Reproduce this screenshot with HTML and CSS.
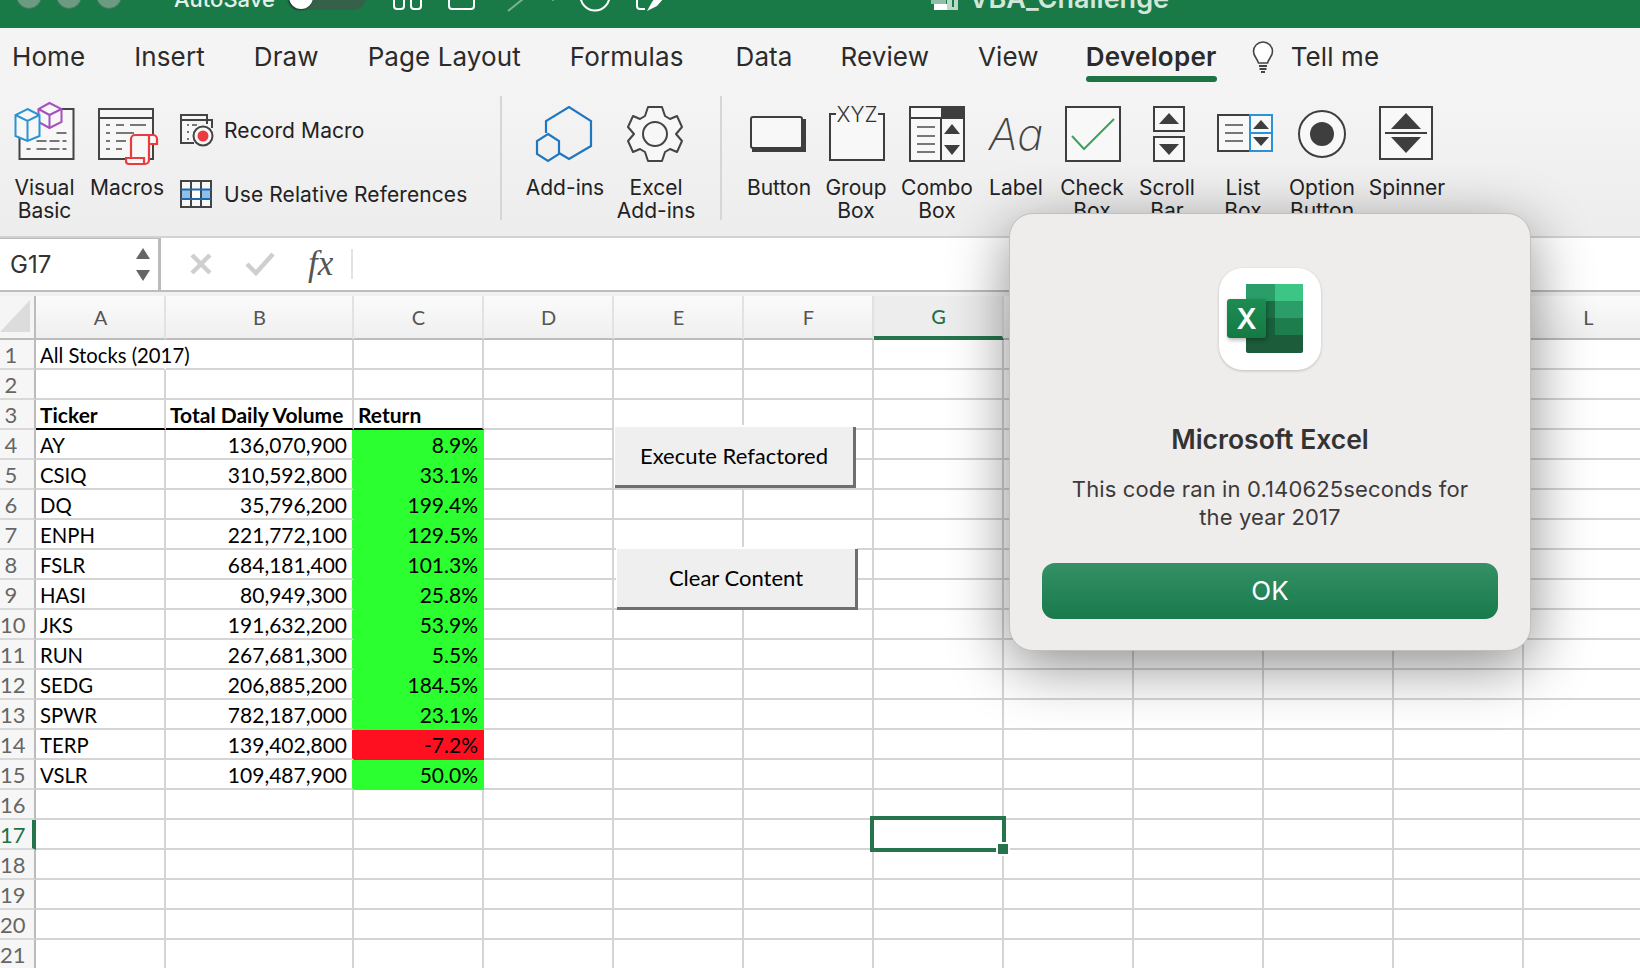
FILE: index.html
```html
<!DOCTYPE html>
<html lang="en">
<head>
<meta charset="utf-8">
<title>VBA_Challenge</title>
<link rel="stylesheet" href="styles.css">
</head>
<body>
<div class="app">
  <header class="titlebar">
    <div class="lights"><span class="light"></span><span class="light"></span><span class="light"></span></div>
    <span class="autosave">AutoSave</span>
    <div class="toggle"><span class="knob"></span><span class="off">Off</span></div>
    <svg class="qat" width="280" height="28" viewBox="390 0 280 28">
      <g fill="none" stroke="#fff" stroke-width="2">
        <path d="M393 -6V6a3 3 0 0 0 3 3h4a3 3 0 0 0 3-3V-6"/>
        <path d="M410 -6V6a3 3 0 0 0 3 3h4a3 3 0 0 0 3-3V-6"/>
        <path d="M448 -6V6a3 3 0 0 0 3 3h19a3 3 0 0 0 3-3V-6"/>
        <path d="M507 11L522 -1" stroke="#7fb296"/>
        <circle cx="594" cy="-4" r="14.5"/>
        <path d="M636 -6V6a3 3 0 0 0 3 3h5"/>
      </g>
      <path d="M646 11L651 2L654 -2L663 -2L656 6Z" fill="#fff"/>
      <circle cx="552" cy="0" r="1" fill="#7fb296"/>
    </svg>
    <svg class="docicon" width="28" height="28" viewBox="932 0 28 28">
      <rect x="932" y="-4" width="15" height="8" fill="#8fbfa5"/>
      <rect x="935" y="4" width="13" height="6" fill="#fff"/>
      <rect x="948" y="-4" width="11" height="14" fill="#bcd8c8"/>
      <rect x="953" y="-4" width="2" height="11" fill="#1a7a47"/>
    </svg>
    <span class="doctitle">VBA_Challenge</span>
  </header>

  <nav class="tabs">
    <span class="tab">Home</span>
    <span class="tab">Insert</span>
    <span class="tab">Draw</span>
    <span class="tab">Page Layout</span>
    <span class="tab">Formulas</span>
    <span class="tab tab-data">Data</span>
    <span class="tab">Review</span>
    <span class="tab">View</span>
    <span class="tab tab-active">Developer</span>
    <svg class="bulb" width="24" height="34" viewBox="0 0 24 34">
      <path d="M12 2a9.500 9.500 0 0 0-9.500 9.500c0 4.500 3.500 6.500 5 11.500h9c1.500-5 5-7 5-11.500A9.500 9.500 0 0 0 12 2Z" fill="#fff" stroke="#444" stroke-width="1.600"/>
      <path d="M8 26h8M8.500 29h7M10 32h4" stroke="#444" stroke-width="1.800" fill="none"/>
    </svg>
    <span class="tab tell">Tell me</span>
  </nav>

  <section class="ribbon">
    <div class="tool">
      <svg class="ic" width="60" height="80" viewBox="14.500 96 60 80">
        <path d="M60 109H73V159H19V134" fill="#f7f7f7" stroke="#444" stroke-width="2"/>
        <path d="M56 133H66M36 141H66M36 149H66M26 149H30" stroke="#777" stroke-width="2" stroke-dasharray="10 3" fill="none"/>
        <g fill="#f7f7f7" stroke="#a64fbf" stroke-width="2"><path d="M49 103L61 109V122L49 128L38 122V109Z"/><path d="M38 109L49 115L61 109M49 115V128" fill="none"/></g>
        <g fill="#f7f7f7" stroke="#2a93d5" stroke-width="2"><path d="M27 109L39 115V136L27 141L15 136V115Z"/><path d="M15 115L27 121L39 115M27 121V141" fill="none"/></g>
      </svg>
      <span class="label">Visual<br>Basic</span>
    </div>
    <div class="tool">
      <svg class="ic" width="60" height="80" viewBox="97 96 60 80">
        <path d="M99 109H153V159H99ZM99 118H153" fill="#f7f7f7" stroke="#444" stroke-width="2"/>
        <path d="M106 125H110M116 125H124M130 125H146M106 133H110M116 133H134M106 141H110M116 141H126M106 149H110M116 149H122" stroke="#777" stroke-width="2" fill="none"/>
        <path d="M131 159V139a4 4 0 0 1 4-4H153a4 4 0 0 1 4 4v5h-8M149 135v25a4 4 0 0 1-4 4H129a3 3 0 0 1-3-3V158H144v6" fill="#f7f7f7" stroke="#ea3c40" stroke-width="2.200"/>
      </svg>
      <span class="label">Macros</span>
    </div>
    <div class="smalls">
      <div class="small">
        <svg width="36" height="36" viewBox="179 112 36 36">
          <path d="M207 124V115H181V143H194M181 120H212V128" fill="#f7f7f7" stroke="#444" stroke-width="2"/>
          <path d="M187 125h2M192 125h5M187 132h2M187 139h2" stroke="#777" stroke-width="2"/>
          <circle cx="203" cy="136" r="9.500" fill="#f7f7f7" stroke="#444" stroke-width="2"/>
          <circle cx="203" cy="136" r="5.500" fill="#ea3c40"/>
        </svg>
        <span>Record Macro</span>
      </div>
      <div class="small">
        <svg width="36" height="36" viewBox="179 176 36 36">
          <rect x="181" y="181" width="30" height="26" fill="#f7f7f7"/>
          <rect x="181" y="190" width="30" height="9" fill="#8cc0ec"/>
          <rect x="191" y="190" width="10" height="9" fill="#fff"/>
          <path d="M181 181H211V207H181ZM191 181V207M201 181V207" fill="none" stroke="#444" stroke-width="2"/>
          <path d="M181 189.500H211M181 199H211" stroke="#1f66ac" stroke-width="2"/>
        </svg>
        <span>Use Relative References</span>
      </div>
    </div>
    <div class="sep"></div>
    <div class="tool">
      <svg class="ic" width="60" height="80" viewBox="535 96 60 80">
        <path d="M546 133V121L569 107L591 121V146L569 159L559 153" fill="none" stroke="#2176c0" stroke-width="2.200"/>
        <path d="M548 134L559 141V154L548 161L537 154V141Z" fill="none" stroke="#2176c0" stroke-width="2.200"/>
      </svg>
      <span class="label">Add-ins</span>
    </div>
    <div class="tool">
      <svg class="ic" width="60" height="80" viewBox="626 96 60 80">
        <path d="M648 107H662L665 116L670 119L677 116L682 127L676 134L682 141L677 152L670 149L665 152L662 161H648L645 152L640 149L633 152L628 141L634 134L628 127L633 116L640 119L645 116Z" fill="#f7f7f7" stroke="#444" stroke-width="2" stroke-linejoin="round"/>
        <circle cx="655" cy="134" r="12" fill="none" stroke="#444" stroke-width="2"/>
      </svg>
      <span class="label">Excel<br>Add-ins</span>
    </div>
    <div class="sep"></div>
    <div class="tool">
      <svg class="ic" width="60" height="80" viewBox="749 96 60 80">
        <path d="M752 150H804V119" fill="none" stroke="#3e3e3e" stroke-width="4"/>
        <rect x="751" y="117" width="51" height="31" rx="2" fill="#f8f8f8" stroke="#3e3e3e" stroke-width="2"/>
      </svg>
      <span class="label">Button</span>
    </div>
    <div class="tool">
      <svg class="ic" width="60" height="80" viewBox="826 96 60 80">
        <path d="M836 114H830V160H884V114H878" fill="#f8f8f8" stroke="#3e3e3e" stroke-width="2"/>
        <text class="xyz" x="857" y="122" text-anchor="middle">XYZ</text>
      </svg>
      <span class="label">Group<br>Box</span>
    </div>
    <div class="tool">
      <svg class="ic" width="60" height="80" viewBox="907 96 60 80">
        <rect x="910" y="107" width="54" height="54" fill="#f8f8f8" stroke="#3e3e3e" stroke-width="2"/>
        <rect x="941" y="107" width="23" height="11" fill="#3e3e3e"/>
        <path d="M910 118H964M941 118V161" stroke="#3e3e3e" stroke-width="2"/>
        <path d="M917 127H935M917 136H935M917 144H935M917 152H935" stroke="#777" stroke-width="2"/>
        <path d="M952 124L960 134H944ZM952 155L944 145H960Z" fill="#3e3e3e"/>
      </svg>
      <span class="label">Combo<br>Box</span>
    </div>
    <div class="tool">
      <div class="aa">Aa</div>
      <span class="label">Label</span>
    </div>
    <div class="tool">
      <svg class="ic" width="60" height="80" viewBox="1062 96 60 80">
        <rect x="1066" y="107" width="54" height="54" fill="#f8f8f8" stroke="#3e3e3e" stroke-width="2"/>
        <path d="M1072 136L1084 149L1114 119" fill="none" stroke="#3ea35a" stroke-width="2"/>
      </svg>
      <span class="label">Check<br>Box</span>
    </div>
    <div class="tool">
      <svg class="ic" width="60" height="80" viewBox="1137 96 60 80">
        <rect x="1154" y="107" width="30" height="24" fill="#f8f8f8" stroke="#3e3e3e" stroke-width="2"/>
        <rect x="1154" y="137" width="30" height="24" fill="#f8f8f8" stroke="#3e3e3e" stroke-width="2"/>
        <path d="M1169 113L1179 124H1159ZM1169 155L1159 144H1179Z" fill="#3e3e3e"/>
      </svg>
      <span class="label">Scroll<br>Bar</span>
    </div>
    <div class="tool">
      <svg class="ic" width="60" height="80" viewBox="1213 96 60 80">
        <rect x="1218" y="115" width="36" height="36" fill="#f8f8f8" stroke="#3e3e3e" stroke-width="2"/>
        <path d="M1225 125H1243M1225 133H1243M1225 141H1243" stroke="#777" stroke-width="2"/>
        <path d="M1250 115H1272V133H1250ZM1250 133H1272V151H1250Z" fill="#f8f8f8" stroke="#2a93d5" stroke-width="2"/>
        <path d="M1261 120L1269 129H1253ZM1261 146L1253 137H1269Z" fill="#3e3e3e"/>
      </svg>
      <span class="label">List<br>Box</span>
    </div>
    <div class="tool">
      <svg class="ic" width="60" height="80" viewBox="1293 96 60 80">
        <circle cx="1323" cy="134" r="23" fill="#f8f8f8" stroke="#3e3e3e" stroke-width="2"/>
        <circle cx="1323" cy="134" r="12" fill="#3e3e3e"/>
      </svg>
      <span class="label">Option<br>Button</span>
    </div>
    <div class="tool">
      <svg class="ic" width="60" height="80" viewBox="1377 96 60 80">
        <rect x="1380" y="107" width="52" height="52" fill="#f8f8f8" stroke="#3e3e3e" stroke-width="2"/>
        <path d="M1406 113L1421 129H1391ZM1406 153L1391 137H1421Z" fill="#3e3e3e"/>
        <path d="M1385 133H1427" stroke="#3e3e3e" stroke-width="2"/>
      </svg>
      <span class="label">Spinner</span>
    </div>
  </section>

  <section class="formula">
    <div class="namebox">
      <span class="cellref">G17</span>
      <svg width="16" height="36" viewBox="0 0 16 36"><path d="M8 1L15 12H1ZM8 34L1 23H15Z" fill="#666"/></svg>
    </div>
    <svg class="fbtn" width="190" height="40" viewBox="161 246 190 40">
      <path d="M192 257L210 275M210 257L192 275" stroke="#cfcfcf" stroke-width="4.500" fill="none"/>
      <path d="M247 266L256 275L273 256" stroke="#cfcfcf" stroke-width="4.500" fill="none"/>
    </svg>
    <span class="fx">fx</span>
    <span class="fsep"></span>
  </section>

  <div class="gap"></div>

  <main class="sheet">
    <table class="grid">
      <colgroup>
        <col class="c-hd"><col class="c-a"><col class="c-b"><col class="c-a"><col class="c-a"><col class="c-a"><col class="c-a"><col class="c-a"><col class="c-a"><col class="c-a"><col class="c-a"><col class="c-a"><col class="c-a">
      </colgroup>
      <thead>
        <tr>
          <th class="corner"><svg width="30" height="36" viewBox="0 0 30 36"><path d="M30 4V36H0Z" fill="#dcdcdc"/></svg></th>
          <th>A</th><th>B</th><th>C</th><th>D</th><th>E</th><th>F</th><th class="col-sel">G</th><th>H</th><th>I</th><th>J</th><th>K</th><th>L</th>
        </tr>
      </thead>
      <tbody>
        <tr><th>1</th><td class="spill txt">All Stocks (2017)</td><td></td><td></td><td></td><td></td><td></td><td></td><td></td><td></td><td></td><td></td><td></td></tr>
        <tr><th>2</th><td></td><td></td><td></td><td></td><td></td><td></td><td></td><td></td><td></td><td></td><td></td><td></td></tr>
        <tr><th>3</th><td class="hb">Ticker</td><td class="hb">Total Daily Volume</td><td class="hb">Return</td><td></td><td></td><td></td><td></td><td></td><td></td><td></td><td></td><td></td></tr>
        <tr><th>4</th><td class="txt">AY</td><td class="num pos">136,070,900</td><td class="num up">8.9%</td><td></td><td></td><td></td><td></td><td></td><td></td><td></td><td></td><td></td></tr>
        <tr><th>5</th><td class="txt">CSIQ</td><td class="num pos">310,592,800</td><td class="num up">33.1%</td><td></td><td></td><td></td><td></td><td></td><td></td><td></td><td></td><td></td></tr>
        <tr><th>6</th><td class="txt">DQ</td><td class="num pos">35,796,200</td><td class="num up">199.4%</td><td></td><td></td><td></td><td></td><td></td><td></td><td></td><td></td><td></td></tr>
        <tr><th>7</th><td class="txt">ENPH</td><td class="num pos">221,772,100</td><td class="num up">129.5%</td><td></td><td></td><td></td><td></td><td></td><td></td><td></td><td></td><td></td></tr>
        <tr><th>8</th><td class="txt">FSLR</td><td class="num pos">684,181,400</td><td class="num up">101.3%</td><td></td><td></td><td></td><td></td><td></td><td></td><td></td><td></td><td></td></tr>
        <tr><th>9</th><td class="txt">HASI</td><td class="num pos">80,949,300</td><td class="num up">25.8%</td><td></td><td></td><td></td><td></td><td></td><td></td><td></td><td></td><td></td></tr>
        <tr><th>10</th><td class="txt">JKS</td><td class="num pos">191,632,200</td><td class="num up">53.9%</td><td></td><td></td><td></td><td></td><td></td><td></td><td></td><td></td><td></td></tr>
        <tr><th>11</th><td class="txt">RUN</td><td class="num pos">267,681,300</td><td class="num up">5.5%</td><td></td><td></td><td></td><td></td><td></td><td></td><td></td><td></td><td></td></tr>
        <tr><th>12</th><td class="txt">SEDG</td><td class="num pos">206,885,200</td><td class="num up">184.5%</td><td></td><td></td><td></td><td></td><td></td><td></td><td></td><td></td><td></td></tr>
        <tr><th>13</th><td class="txt">SPWR</td><td class="num pos">782,187,000</td><td class="num up">23.1%</td><td></td><td></td><td></td><td></td><td></td><td></td><td></td><td></td><td></td></tr>
        <tr><th>14</th><td class="txt">TERP</td><td class="num neg">139,402,800</td><td class="num down">-7.2%</td><td></td><td></td><td></td><td></td><td></td><td></td><td></td><td></td><td></td></tr>
        <tr><th>15</th><td class="txt">VSLR</td><td class="num pos">109,487,900</td><td class="num up">50.0%</td><td></td><td></td><td></td><td></td><td></td><td></td><td></td><td></td><td></td></tr>
        <tr><th>16</th><td></td><td></td><td></td><td></td><td></td><td></td><td></td><td></td><td></td><td></td><td></td><td></td></tr>
        <tr><th class="row-sel">17</th><td></td><td></td><td></td><td></td><td></td><td></td><td class="active"><span class="selbox"></span><span class="selnotch"></span><span class="handle"></span></td><td></td><td></td><td></td><td></td><td></td></tr>
        <tr><th>18</th><td></td><td></td><td></td><td></td><td></td><td></td><td></td><td></td><td></td><td></td><td></td><td></td></tr>
        <tr><th>19</th><td></td><td></td><td></td><td></td><td></td><td></td><td></td><td></td><td></td><td></td><td></td><td></td></tr>
        <tr><th>20</th><td></td><td></td><td></td><td></td><td></td><td></td><td></td><td></td><td></td><td></td><td></td><td></td></tr>
        <tr><th>21</th><td></td><td></td><td></td><td></td><td></td><td></td><td></td><td></td><td></td><td></td><td></td><td></td></tr>
      </tbody>
    </table>
    <div class="formbtn btn-run">Execute Refactored</div>
    <div class="formbtn btn-clear">Clear Content</div>
  </main>

  <div class="dialog">
    <div class="appicon">
      <svg width="102" height="102" viewBox="1219 267 102 102">
        <rect x="1246" y="283" width="57" height="69" rx="2" fill="#1c5c3a"/>
        <rect x="1246" y="283" width="29" height="17" fill="#2a9d68"/>
        <rect x="1275" y="283" width="28" height="17" fill="#3dc585"/>
        <rect x="1246" y="300" width="29" height="17" fill="#1a6e43"/>
        <rect x="1275" y="300" width="28" height="17" fill="#2a9d68"/>
        <rect x="1246" y="317" width="29" height="17" fill="#17603c"/>
        <rect x="1275" y="317" width="28" height="17" fill="#1e7d4d"/>
      </svg>
      <span class="badge">X</span>
    </div>
    <h2 class="dlg-title">Microsoft Excel</h2>
    <p class="dlg-msg">This code ran in 0.140625seconds for<br>the year 2017</p>
    <button class="dlg-ok">OK</button>
  </div>
</div>
</body>
</html>
```
FILE: styles.css
```css
* { box-sizing: border-box; }
html, body { margin: 0; padding: 0; }
body { background: #fff; font-family: "Inter", "Liberation Sans", sans-serif; overflow: hidden; }
.app { position: relative; width: 1640px; height: 968px; overflow: hidden; }

/* title bar */
.titlebar { height: 28px; background: #1a7a47; display: flex; align-items: flex-end; overflow: visible; }
.lights { display: flex; gap: 14px; margin-left: 16px; margin-bottom: 19px; }
.light { width: 26px; height: 26px; border-radius: 50%; background: #6c9b82; border: 1px solid #3e7a5b; }
.autosave { margin-left: 52px; margin-bottom: 17px; color: #e4f0e9; font-size: 22px; line-height: 24px; font-weight: 500; }
.toggle { position: relative; width: 78px; height: 26px; margin-left: 13px; margin-bottom: 18px; border-radius: 13px; background: #356049; }
.knob { position: absolute; left: 1px; top: 1px; width: 24px; height: 24px; border-radius: 50%; background: #fff; box-shadow: -1px 1px 2px rgba(0,0,0,.5); }
.off { position: absolute; left: 33px; top: 0; color: #cfe0d6; font-size: 17px; line-height: 20px; }
.qat { display: block; margin-left: 25px; overflow: visible; }
.docicon { display: block; margin-left: 260px; overflow: visible; }
.doctitle { margin-left: 10px; margin-bottom: 16px; color: #d3e6da; font-size: 27px; line-height: 26px; font-weight: 600; white-space: nowrap; }

/* tabs */
.tabs { height: 60px; background: #f4f4f4; display: flex; align-items: center; gap: 49px; padding: 0 0 2px 12px; color: #2b2b2b; }
.tab { position: relative; font-size: 26px; letter-spacing: .1px; line-height: 32px; font-weight: 400; white-space: nowrap; }
.tab-data { margin-left: 3px; margin-right: -1px; }
.tab-active { margin-left: -2px; font-weight: 600; letter-spacing: .3px; }
.tab-active::after { content: ""; position: absolute; left: 0; right: 0; top: 35px; height: 6px; border-radius: 3px; background: #1f7244; }
.bulb { display: block; margin-left: -15px; }
.tell { margin-left: -33px; }

/* ribbon */
.ribbon { height: 150px; padding: 8px 0 0 8px; overflow: hidden; background: linear-gradient(#f4f4f4, #ededed); border-bottom: 2px solid #d2d2d2; display: grid; grid-template-columns: 73px 92px 317px 21px 108px 74px 56px 60px 94px 68px 90px 62px 88px 64px 94px 76px; align-items: start; }
.tool { display: flex; flex-direction: column; align-items: center; min-width: 0; }
.ic { display: block; overflow: visible; flex: none; }
.label { font-size: 21px; line-height: 23px; color: #222; text-align: center; white-space: nowrap; }
.xyz { font-size: 21px; fill: #333; font-family: "Inter", sans-serif; font-weight: 300; }
.aa { height: 80px; padding-top: 14px; font-size: 44px; line-height: 48px; font-style: italic; font-weight: 200; color: #444; font-family: "Inter", sans-serif; }
.smalls { display: flex; flex-direction: column; padding-left: 6px; gap: 28px; padding-top: 16px; }
.small { display: flex; align-items: center; gap: 9px; height: 36px; font-size: 21px; letter-spacing: .1px; color: #222; white-space: nowrap; }
.small svg { display: block; flex: none; }
.sep { width: 2px; height: 124px; background: #d6d6d6; justify-self: center; }

/* formula bar */
.formula { height: 54px; background: #fff; border-bottom: 2px solid #bdbdbd; display: flex; align-items: center; }
.namebox { width: 161px; height: 100%; display: flex; align-items: center; justify-content: space-between; padding: 0 7px 0 10px; border-right: 3px solid #bbb; border-top: 1px solid #bbb; }
.cellref { font-size: 24px; color: #333; }
.fbtn { display: block; flex: none; }
.fx { margin-left: -43px; width: 40px; font-family: "Liberation Serif", serif; font-style: italic; font-size: 35px; line-height: 40px; color: #555; }
.fsep { margin-left: 3px; width: 2px; height: 30px; background: #e2e2e2; }
.gap { height: 4px; background: #f1f1f1; }

/* sheet */
.sheet { position: relative; height: 672px; overflow: hidden; }
.grid { table-layout: fixed; border-collapse: separate; border-spacing: 0; width: 1654px; font-family: "Lato", "Liberation Sans", sans-serif; }
.c-hd { width: 36px; }
.c-a { width: 130px; }
.c-b { width: 188px; }
.grid thead th { height: 44px; padding: 0 0 0 1px; font-size: 20px; font-weight: 400; color: #555; background: linear-gradient(#fbfbfb, #efefef); border-right: 2px solid #e2e2e2; border-bottom: 2px solid #bcbcbc; }
.grid thead .corner { padding: 0; background: #f5f5f5; border-right-color: #bcbcbc; vertical-align: top; text-align: left; }
.corner svg { display: block; }
.grid thead .col-sel { color: #1f7244; background: #ededed; border-bottom: 4px solid #25744b; font-weight: 500; }
.grid tbody th { height: 30px; padding: 0 12px 0 0; font-size: 22px; font-weight: 400; color: #666; text-align: center; background: #f6f6f6; border-right: 2px solid #bcbcbc; border-bottom: 2px solid #d9d9d9; }
.grid tbody .row-sel { color: #1f7244; border-right: 4px solid #25744b; }
.grid td { height: 30px; padding: 0 5px 0 4px; font-size: 21px; color: #000; white-space: nowrap; border-right: 2px solid #d4d4d4; border-bottom: 2px solid #d4d4d4; }
.grid .txt { padding-top: 1px; font-size: 20.3px; }
.grid .spill { border-right-color: transparent; }
.grid .hb { font-weight: 700; border-bottom-color: #000; }
.num { text-align: right; }
.grid .num.up, .grid .num.down { padding-right: 4px; }
.grid .pos { border-right-color: #2bff2f; }
.grid .neg { border-right-color: #ff1020; }
.grid .up { background: #2bff2f; border-color: #2bff2f; }
.grid .down { background: #ff1020; border-color: #ff1020; }
.grid .active { position: relative; z-index: 2; }
.selbox { position: absolute; left: -4px; top: -4px; width: 136px; height: 36px; border: 4px solid #25744b; }
.selnotch { position: absolute; left: 122px; top: 22px; width: 14px; height: 14px; background: #fff; }
.handle { position: absolute; left: 124px; top: 24px; width: 10px; height: 10px; background: #25744b; }

.formbtn { position: absolute; width: 241px; height: 61px; padding-bottom: 2px; display: flex; align-items: center; justify-content: center; font-family: "Lato", "Liberation Sans", sans-serif; font-size: 22px; color: #000; background: #efefef; border-right: 3px solid #6f6f6f; border-bottom: 3px solid #6f6f6f; box-shadow: -1px -2px 0 #fff; }
.btn-run { left: 615px; top: 131px; }
.btn-clear { left: 617px; top: 253px; }

/* alert */
.dialog { position: absolute; left: 1009px; top: 213px; width: 522px; height: 438px; padding: 54px 32px 32px; display: flex; flex-direction: column; align-items: center; background: #efecec; border: 1px solid #c2bfbf; border-radius: 24px; box-shadow: 0 15px 60px rgba(0,0,0,.45); }
.appicon { position: relative; flex: none; width: 102px; height: 102px; background: #fff; border-radius: 24px; box-shadow: 0 1px 3px rgba(0,0,0,.2); }
.appicon svg { display: block; border-radius: 24px; }
.badge { position: absolute; left: 8px; top: 31px; width: 39px; height: 39px; border-radius: 3px; display: flex; align-items: center; justify-content: center; background: linear-gradient(#1c8c52, #147a43); color: #fff; font-family: "Inter", sans-serif; font-size: 28px; font-weight: 600; box-shadow: 1px 2px 4px rgba(0,0,0,.3); }
.dlg-title { margin: 53px 0 0; font-size: 26.5px; line-height: 32px; font-weight: 600; color: #333; white-space: nowrap; }
.dlg-msg { margin: 20px 0 0; font-size: 22px; letter-spacing: .13px; line-height: 28px; color: #3c3a3a; text-align: center; white-space: nowrap; }
.dlg-ok { margin-top: 32px; width: 456px; height: 56px; flex: none; padding: 0 0 2px; border: 0; border-radius: 13px; background: linear-gradient(#359066, #187a4b); color: #fff; font-family: "Inter", sans-serif; font-size: 26px; }
```
